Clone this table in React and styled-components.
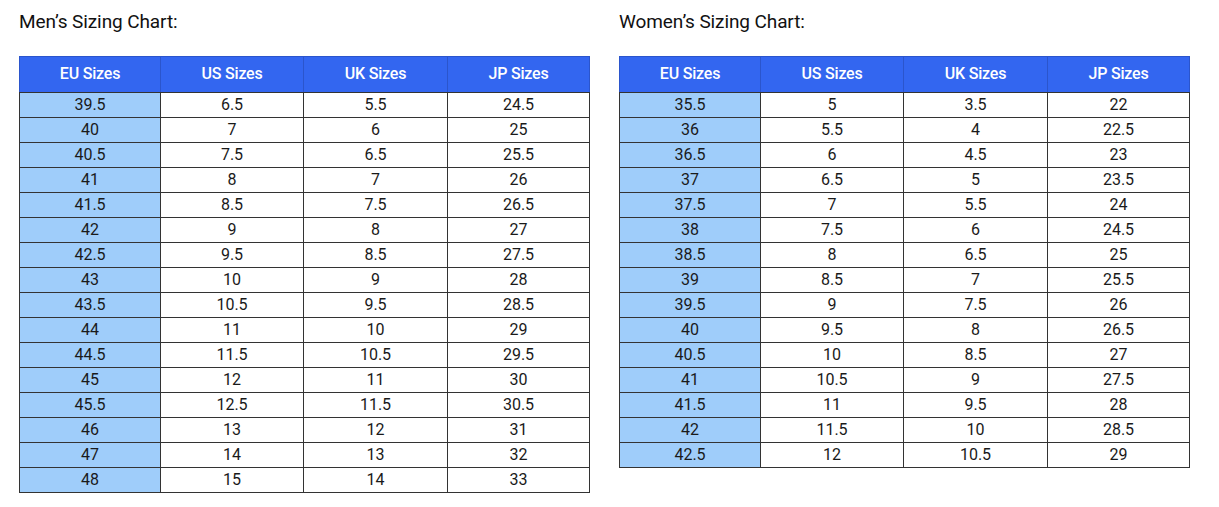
import React from "react";
import styled, { createGlobalStyle } from "styled-components";

const Global = createGlobalStyle`
  html, body { margin: 0; padding: 0; background: #fff; }
  body { font-family: Roboto, "Liberation Sans", Arial, sans-serif; color: #111; }
`;

const Page = styled.div`
  display: flex;
  gap: 30px;
  padding: 11px 0 0 19px;
`;

const Section = styled.section`
  display: flex;
  flex-direction: column;
  width: 570px;
`;

const Title = styled.h2`
  margin: 0 0 24px 0;
  font-size: 19px;
  line-height: 21px;
  font-weight: 400;
  color: #111;
  letter-spacing: -0.1px;
`;

const Table = styled.table`
  border-collapse: collapse;
  table-layout: fixed;
  width: 570px;
`;

const HeadRow = styled.tr`
  height: 36px;
`;

const Th = styled.th`
  background: #3366f0;
  color: #fff;
  font-weight: 500;
  font-size: 16px;
  border: 1px solid #2b55cc;
  border-bottom-color: #333;
  padding: 0 0 2px 0;
  text-align: center;
  letter-spacing: -0.2px;
`;

const Row = styled.tr`
  height: 25px;
`;

const Td = styled.td`
  background: ${(p) => (p.$eu ? "#9fcdfa" : "#fff")};
  border: 1px solid #333;
  padding: 0;
  font-size: 16px;
  line-height: 20px;
  text-align: center;
  color: #1a1a1a;
`;

const widths = [141, 143, 144, 142];

const men = [
  ["39.5", "6.5", "5.5", "24.5"],
  ["40", "7", "6", "25"],
  ["40.5", "7.5", "6.5", "25.5"],
  ["41", "8", "7", "26"],
  ["41.5", "8.5", "7.5", "26.5"],
  ["42", "9", "8", "27"],
  ["42.5", "9.5", "8.5", "27.5"],
  ["43", "10", "9", "28"],
  ["43.5", "10.5", "9.5", "28.5"],
  ["44", "11", "10", "29"],
  ["44.5", "11.5", "10.5", "29.5"],
  ["45", "12", "11", "30"],
  ["45.5", "12.5", "11.5", "30.5"],
  ["46", "13", "12", "31"],
  ["47", "14", "13", "32"],
  ["48", "15", "14", "33"],
];

const women = [
  ["35.5", "5", "3.5", "22"],
  ["36", "5.5", "4", "22.5"],
  ["36.5", "6", "4.5", "23"],
  ["37", "6.5", "5", "23.5"],
  ["37.5", "7", "5.5", "24"],
  ["38", "7.5", "6", "24.5"],
  ["38.5", "8", "6.5", "25"],
  ["39", "8.5", "7", "25.5"],
  ["39.5", "9", "7.5", "26"],
  ["40", "9.5", "8", "26.5"],
  ["40.5", "10", "8.5", "27"],
  ["41", "10.5", "9", "27.5"],
  ["41.5", "11", "9.5", "28"],
  ["42", "11.5", "10", "28.5"],
  ["42.5", "12", "10.5", "29"],
];

const heads = ["EU Sizes", "US Sizes", "UK Sizes", "JP Sizes"];

function Chart({ title, rows }) {
  return (
    <Section>
      <Title>{title}</Title>
      <Table>
        <colgroup>
          {widths.map((w, i) => (
            <col key={i} style={{ width: w }} />
          ))}
        </colgroup>
        <thead>
          <HeadRow>
            {heads.map((h) => (
              <Th key={h}>{h}</Th>
            ))}
          </HeadRow>
        </thead>
        <tbody>
          {rows.map((r, i) => (
            <Row key={i}>
              {r.map((c, j) => (
                <Td key={j} $eu={j === 0}>
                  {c}
                </Td>
              ))}
            </Row>
          ))}
        </tbody>
      </Table>
    </Section>
  );
}

export default function App() {
  return (
    <>
      <Global />
      <Page>
        <Chart title="Men’s Sizing Chart:" rows={men} />
        <Chart title="Women’s Sizing Chart:" rows={women} />
      </Page>
    </>
  );
}
